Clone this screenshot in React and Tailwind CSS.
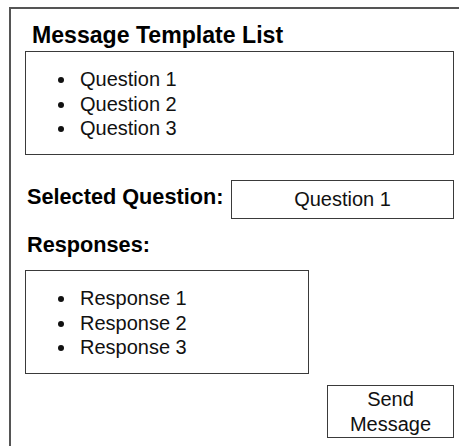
import React from 'react';

const questions = ['Question 1', 'Question 2', 'Question 3'];
const responses = ['Response 1', 'Response 2', 'Response 3'];

function BulletBox({ items, className }) {
  return (
    <div className={`border border-[#3a3a3a] h-[104px] pt-[15px] ${className}`}>
      <ul className="pl-[32px] text-[20px] leading-[24.5px] text-[#111]">
        {items.map((item) => (
          <li key={item} className="flex items-start">
            <span className="mt-[10px] mr-[16px] w-[6px] h-[6px] rounded-full bg-[#111] shrink-0" />
            <span>{item}</span>
          </li>
        ))}
      </ul>
    </div>
  );
}

export default function App() {
  return (
    <div
      className="w-[459px] h-[446px] overflow-hidden bg-white pl-[9px] pt-[7px]"
      style={{ fontFamily: '"Liberation Sans", Arial, sans-serif' }}
    >
      <div className="w-[461px] h-[470px] border-2 border-[#555] px-[14px] pt-[12px]">
        <h3 className="pl-[7px] mb-[2px] text-[23.1px] leading-[28px] font-bold text-black">
          Message Template List
        </h3>
        <BulletBox items={questions} className="w-full" />

        <div className="flex items-start mt-[25px]">
          <span className="mt-[4px] pl-[2px] text-[21.7px] leading-[26px] font-bold text-black">
            Selected Question:
          </span>
          <div className="ml-auto w-[223px] h-[39px] border border-[#3a3a3a] flex items-center justify-center text-[20px] leading-[24.5px] text-[#111]">
            Question 1
          </div>
        </div>

        <div className="mt-[13px] mb-[12px] pl-[2px] text-[21.7px] leading-[26px] font-bold text-black">
          Responses:
        </div>
        <BulletBox items={responses} className="w-[284px]" />

        <div className="flex mt-[11px]">
          <button
            type="button"
            className="ml-auto w-[127px] h-[53px] border border-[#3a3a3a] bg-white text-center text-[20px] leading-[25px] text-[#111]"
          >
            Send Message
          </button>
        </div>
      </div>
    </div>
  );
}
